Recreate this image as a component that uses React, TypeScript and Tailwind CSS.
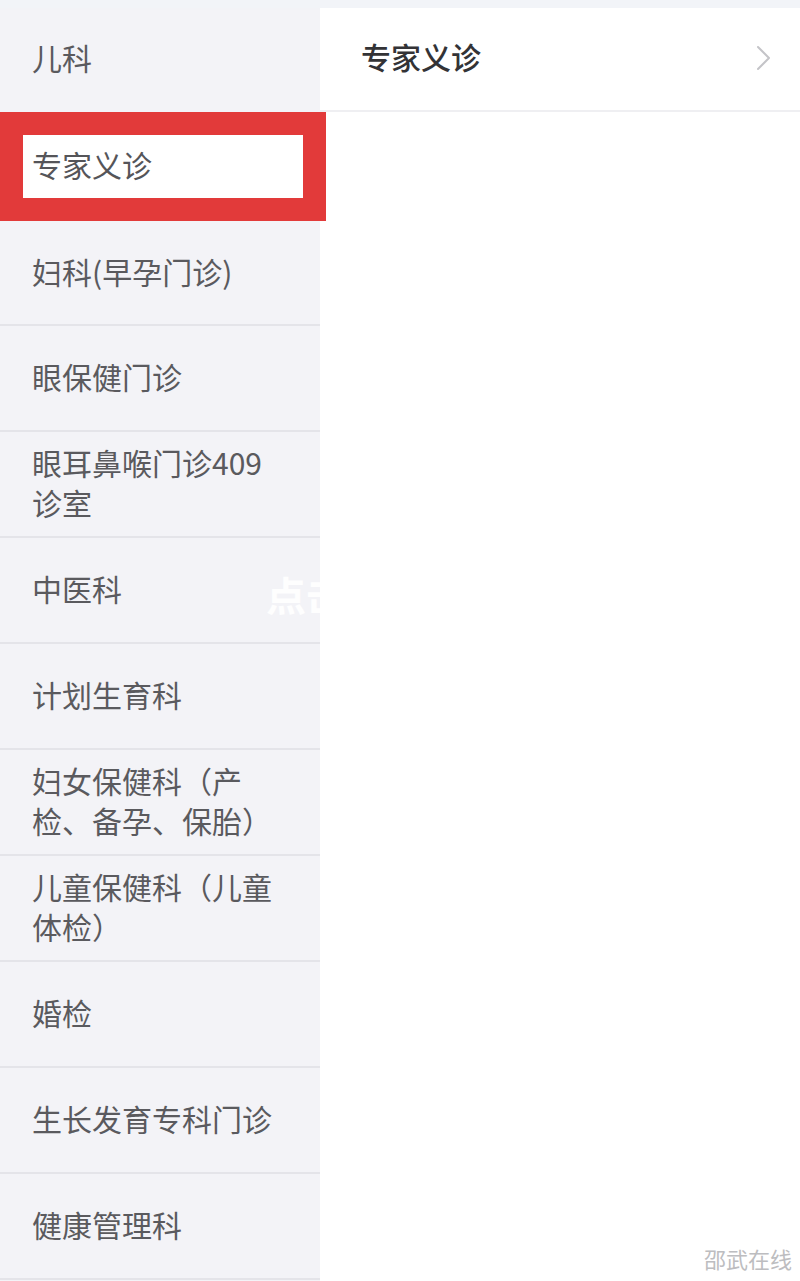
const departments = [
  "妇科(早孕门诊)",
  "眼保健门诊",
  "眼耳鼻喉门诊409诊室",
  "中医科",
  "计划生育科",
  "妇女保健科（产检、备孕、保胎）",
  "儿童保健科（儿童体检）",
  "婚检",
  "生长发育专科门诊",
  "健康管理科",
];

export default function App() {
  return (
    <div
      className="relative w-[800px] h-[1281px] overflow-hidden bg-[#f2f4f8] pt-2 flex"
      style={{ fontFamily: '"Noto Sans CJK SC", "Noto Sans", sans-serif' }}
    >
      {/* left department list */}
      <aside className="w-[320px] shrink-0 flex flex-col bg-[#f3f3f7] text-[30px] text-[#5a5a5e]">
        <div className="h-[104px] flex items-center pl-8 pb-[5px]">儿科</div>

        <div className="relative z-10 w-[326px] h-[109px] bg-[#e23a3a] pl-[23px] pr-[23px] py-[23px]">
          <div className="h-[63px] w-[280px] bg-white flex items-center pl-[9px] pb-[4px] text-[#555559]">
            专家义诊
          </div>
        </div>

        {departments.map((name, i) => (
          <div
            key={name}
            className={
              i === 0
                ? "h-[105px] flex items-center pl-8 pr-8 pb-[4px] leading-[40px] border-b-2 border-[#e4e4e9]"
                : "h-[106px] flex items-center pl-8 pr-8 pb-[4px] leading-[40px] border-b-2 border-[#e4e4e9]"
            }
          >
            <span>{name}</span>
          </div>
        ))}
      </aside>

      {/* right content */}
      <main className="flex-1 bg-white">
        <div className="h-[104px] flex items-center justify-between pl-[41px] pr-[28px] pb-[2px] border-b-2 border-[#efeff2]">
          <span className="text-[30px] font-medium text-[#333336] -mt-[3px]">专家义诊</span>
          <svg width="16" height="26" viewBox="0 0 16 26" fill="none">
            <path d="M2 2 L13 13 L2 24" stroke="#c4c4c8" strokeWidth="2" strokeLinecap="round" strokeLinejoin="round" />
          </svg>
        </div>
      </main>

      {/* watermarks */}
      <span className="absolute left-[266px] top-[564px] text-[40px] font-bold text-white/90 pointer-events-none">
        点击
      </span>
      <span className="absolute right-[8px] bottom-[6px] text-[22px] text-[#bdbdc0] pointer-events-none">
        邵武在线
      </span>
    </div>
  );
}
